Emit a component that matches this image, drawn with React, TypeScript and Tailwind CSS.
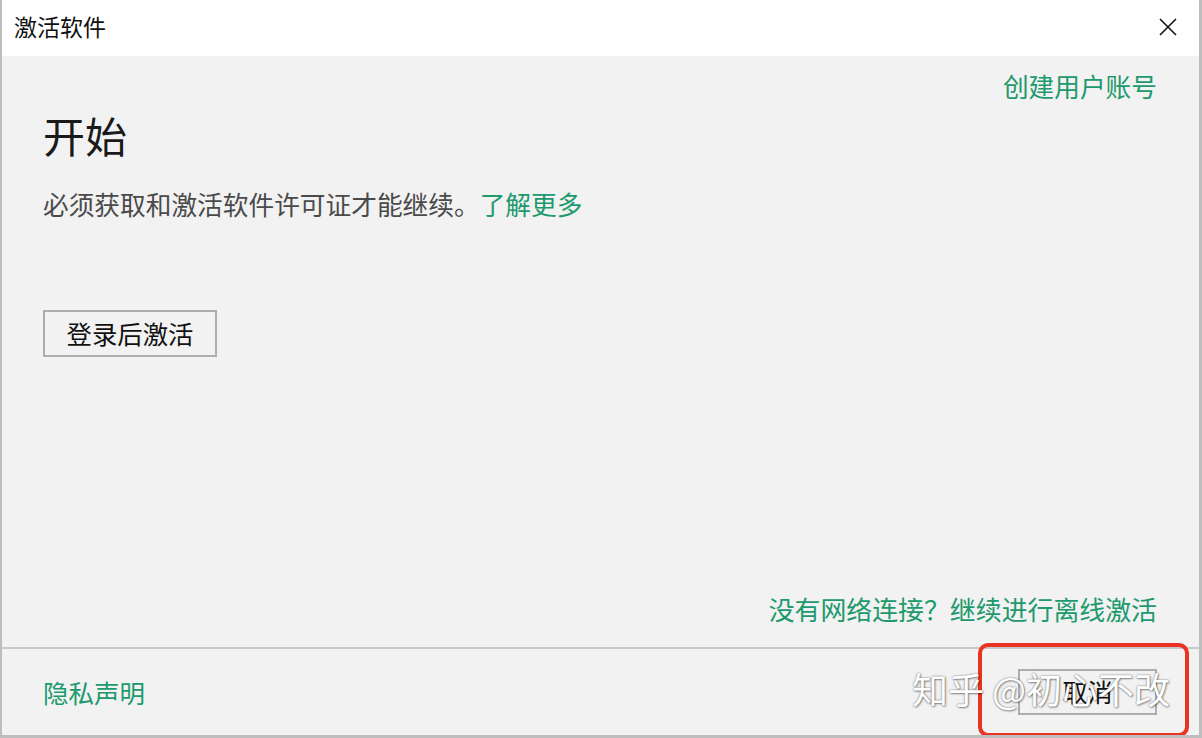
const cjk = { fontFamily: '"Noto Sans CJK SC", "Noto Sans", sans-serif' };

function CloseIcon() {
  return (
    <svg width="18" height="18" viewBox="0 0 18 18" fill="none">
      <path d="M1 1L17 17M17 1L1 17" stroke="#111" strokeWidth="1.6" />
    </svg>
  );
}

export default function App() {
  return (
    <div
      className="relative w-[1202px] h-[738px] flex flex-col border-l-2 border-r-[3px] border-b-[3px] border-[#bdbdbd] bg-[#f2f2f2] overflow-hidden"
      style={cjk}
    >
      {/* title bar */}
      <div className="h-[56px] bg-white flex items-center justify-between pl-[12px] pr-[22px] pb-[3px]">
        <span className="text-[23px] leading-none text-[#111]">激活软件</span>
        <CloseIcon />
      </div>

      {/* body */}
      <div className="flex-1 flex flex-col pl-[41px] pr-[42px]">
        <div className="flex justify-end pt-[14px]">
          <a className="text-[25.7px] leading-[32px] text-[#20996d]">创建用户账号</a>
        </div>
        <h1 className="mt-[8px] text-[42px] leading-[50px] text-[#1a1a1a]">开始</h1>
        <p className="mt-[27px] text-[25.7px] leading-[34px] text-[#4a4a4a]">
          必须获取和激活软件许可证才能继续。<span className="text-[#20996d]">了解更多</span>
        </p>
        <div className="mt-[89px]">
          <button className="w-[174px] h-[47px] border-2 border-[#adadad] bg-[#f2f2f2] text-[25.4px] text-[#111] flex items-center justify-center">
            登录后激活
          </button>
        </div>
        <div className="flex-1" />
        <div className="flex justify-end pb-[21px]">
          <a className="text-[25.9px] leading-[34px] text-[#20996d]">没有网络连接？继续进行离线激活</a>
        </div>
      </div>

      {/* footer */}
      <div className="h-[88px] border-t-2 border-[#c8c8c8] flex items-center justify-between pl-[41px] pr-[42px]">
        <a className="text-[25.5px] leading-[34px] text-[#20996d]">隐私声明</a>
        <button className="w-[139px] h-[46px] border-2 border-[#adadad] bg-[#f2f2f2] text-[25px] text-[#111] flex items-center justify-center">
          取消
        </button>
      </div>

      {/* screenshot annotation + watermark */}
      <div className="absolute left-[976px] top-[643px] w-[211px] h-[94px] border-[4px] border-[#ea3323] rounded-[10px]" />
      <div
        className="absolute left-[910px] top-[666px] text-[36px] leading-[44px] text-white whitespace-nowrap"
        style={{ textShadow: "0 0 2px rgba(0,0,0,0.55), 1px 1px 2px rgba(0,0,0,0.35)" }}
      >
        知乎 @初心不改
      </div>
    </div>
  );
}
